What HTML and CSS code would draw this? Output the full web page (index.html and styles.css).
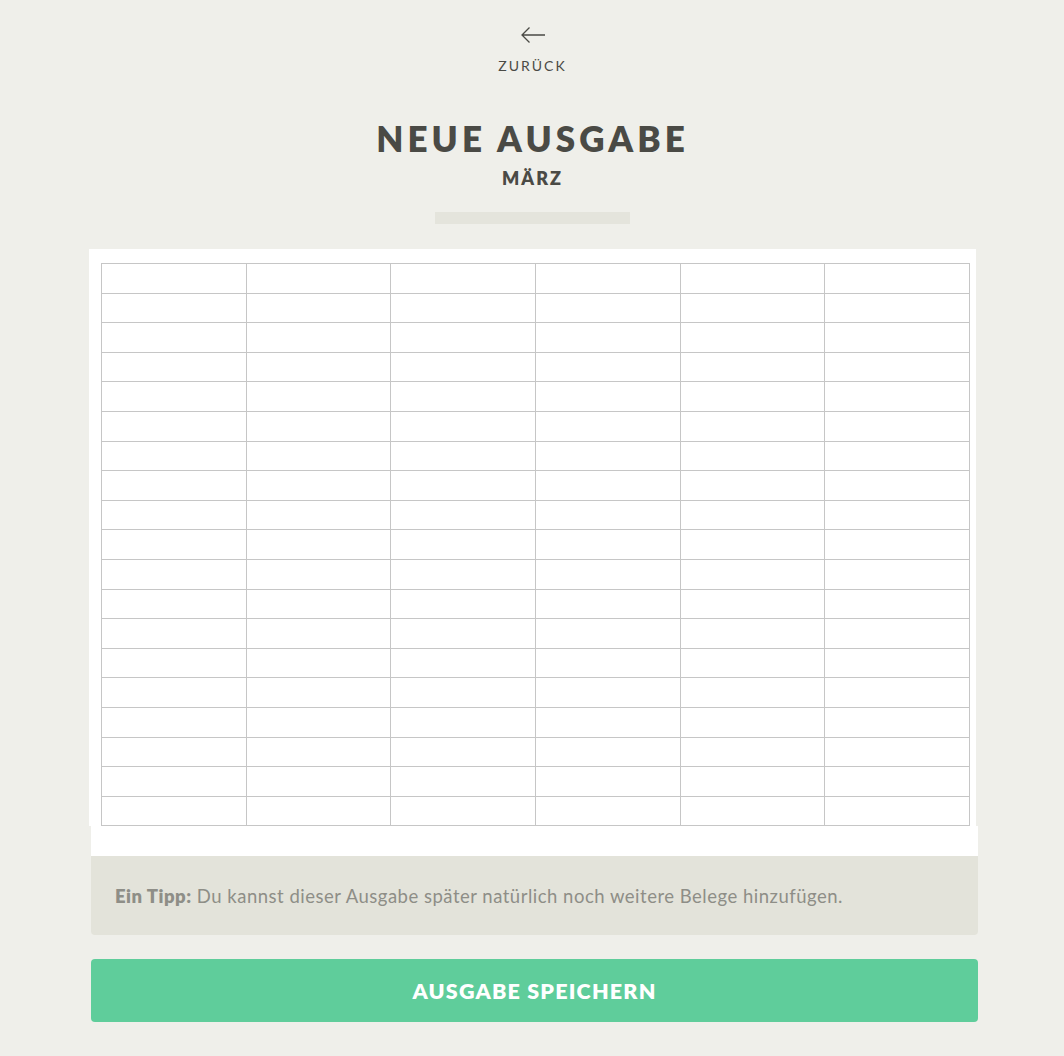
FILE: index.html
```html
<!DOCTYPE html>
<html lang="de">
<head>
<meta charset="utf-8">
<title>Neue Ausgabe</title>
<link rel="stylesheet" href="styles.css">
</head>
<body>
<main class="page">
  <header class="head">
    <a class="back" href="#">
      <svg class="back-icon" width="26" height="18" viewBox="0 0 26 18" aria-hidden="true">
        <path d="M25 9H2M9.5 1.5L2 9l7.5 7.5" fill="none" stroke="#4a4a45" stroke-width="1.3"/>
      </svg>
      <span class="back-label">ZURÜCK</span>
    </a>
    <h1 class="title">NEUE AUSGABE</h1>
    <div class="subtitle">MÄRZ</div>
    <div class="progress"></div>
  </header>
  <section class="sheet">
    <table class="grid">
      <tbody>
        <tr><td></td><td></td><td></td><td></td><td></td><td></td></tr>
        <tr><td></td><td></td><td></td><td></td><td></td><td></td></tr>
        <tr><td></td><td></td><td></td><td></td><td></td><td></td></tr>
        <tr><td></td><td></td><td></td><td></td><td></td><td></td></tr>
        <tr><td></td><td></td><td></td><td></td><td></td><td></td></tr>
        <tr><td></td><td></td><td></td><td></td><td></td><td></td></tr>
        <tr><td></td><td></td><td></td><td></td><td></td><td></td></tr>
        <tr><td></td><td></td><td></td><td></td><td></td><td></td></tr>
        <tr><td></td><td></td><td></td><td></td><td></td><td></td></tr>
        <tr><td></td><td></td><td></td><td></td><td></td><td></td></tr>
        <tr><td></td><td></td><td></td><td></td><td></td><td></td></tr>
        <tr><td></td><td></td><td></td><td></td><td></td><td></td></tr>
        <tr><td></td><td></td><td></td><td></td><td></td><td></td></tr>
        <tr><td></td><td></td><td></td><td></td><td></td><td></td></tr>
        <tr><td></td><td></td><td></td><td></td><td></td><td></td></tr>
        <tr><td></td><td></td><td></td><td></td><td></td><td></td></tr>
        <tr><td></td><td></td><td></td><td></td><td></td><td></td></tr>
        <tr><td></td><td></td><td></td><td></td><td></td><td></td></tr>
        <tr><td></td><td></td><td></td><td></td><td></td><td></td></tr>
        <tr><td></td><td></td><td></td><td></td><td></td><td></td></tr>
      </tbody>
    </table>
  </section>
  <div class="sheet-foot"></div>
  <div class="tip"><strong>Ein Tipp:</strong> Du kannst dieser Ausgabe später natürlich noch weitere Belege hinzufügen.</div>
  <button class="save" type="button">AUSGABE SPEICHERN</button>
</main>
</body>
</html>
```

FILE: styles.css
```css
html, body {
  margin: 0;
  padding: 0;
  background: #efefea;
}

body {
  font-family: Lato, "Noto Sans", sans-serif;
  color: #4a4a45;
}

.page {
  width: 887px;
  margin: 0 0 0 91px;
  padding-top: 26px;
  padding-bottom: 34px;
}

.head {
  display: flex;
  flex-direction: column;
  align-items: center;
  margin-left: -6px;
}

.back {
  display: flex;
  flex-direction: column;
  align-items: center;
  text-decoration: none;
  color: #4a4a45;
}

.back-icon {
  display: block;
  margin-left: 2px;
}

.back-label {
  margin-top: 14px;
  font-size: 14px;
  letter-spacing: 2px;
  line-height: 16px;
  padding-left: 2px;
}

.title {
  margin: 44px 0 0;
  font-size: 35px;
  font-weight: 800;
  letter-spacing: 4.1px;
  line-height: 40px;
  padding-left: 2px;
}

.subtitle {
  margin-top: 9px;
  font-size: 18px;
  font-weight: 800;
  letter-spacing: 2px;
  line-height: 22px;
  padding-left: 2px;
}

.progress {
  width: 195px;
  height: 12px;
  margin: 23px 0 0 2px;
  background: #e4e4dc;
}

.sheet {
  width: 887px;
  margin: 25px 0 0 -2px;
  height: 577px;
  background: #fff;
  overflow: hidden;
  padding: 14px 0 0 12px;
  box-sizing: border-box;
}

.grid {
  width: 869px;
  border-collapse: collapse;
  table-layout: fixed;
}

.grid tr {
  height: 29.6px;
}

.grid td {
  border: 1px solid #c6c6c6;
  padding: 0;
}

.sheet-foot {
  height: 30px;
  background: #fff;
}

.tip {
  height: 79px;
  box-sizing: border-box;
  display: flex;
  align-items: center;
  padding: 0 24px;
  background: #e3e3da;
  border-radius: 0 0 4px 4px;
  color: #8e8e87;
  font-size: 18.5px;
  letter-spacing: 0.5px;
  white-space: pre;
}

.tip strong {
  font-weight: 800;
}

.save {
  display: block;
  width: 100%;
  height: 63px;
  margin-top: 24px;
  border: 0;
  border-radius: 4px;
  background: #5fcd9b;
  color: #fff;
  font-family: Lato, "Noto Sans", sans-serif;
  font-size: 21.5px;
  font-weight: 800;
  letter-spacing: 1.2px;
  padding-left: 6px;
  cursor: pointer;
}
```
